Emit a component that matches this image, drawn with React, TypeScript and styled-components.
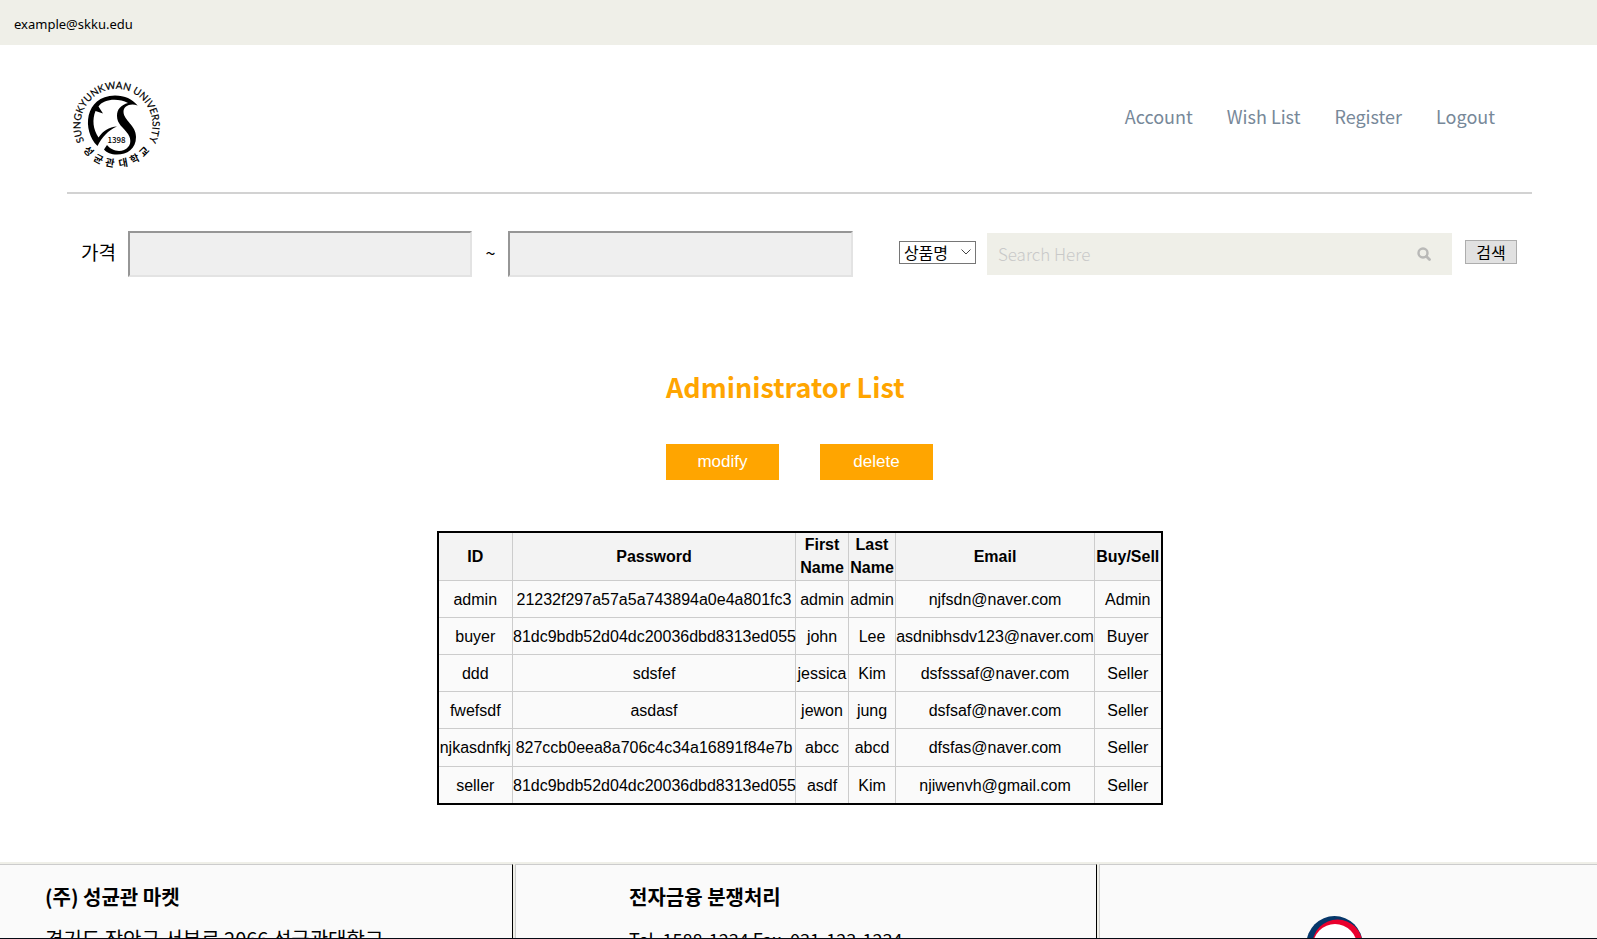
import React from "react";
import styled, { createGlobalStyle } from "styled-components";

const GlobalStyle = createGlobalStyle`
  * { box-sizing: border-box; }
  body {
    margin: 0;
    background: #fff;
    color: #000;
    font-family: "Noto Sans", "Noto Sans CJK KR", sans-serif;
    font-size: 16px;
  }
`;

const Page = styled.div`
  display: flex;
  flex-direction: column;
  height: 100vh;
  overflow: hidden;
  border-bottom: 1px solid #060a14;
`;

const TopBar = styled.div`
  flex: none;
  padding: 14px 14px 10px;
  background: #efefe8;
  font-size: 13px;
  line-height: 21px;
`;

const Header = styled.header`
  flex: none;
  display: flex;
  justify-content: space-between;
  align-items: flex-start;
  height: 149px;
  margin: 0 65px 0 67px;
  padding: 34px 20px 0 3px;
  border-bottom: 2px solid #d2d2d2;
`;

const Nav = styled.nav`
  display: flex;
  padding-top: 25px;
`;

const NavLink = styled.a`
  padding: 0 17px;
  color: #778899;
  font-family: "Noto Sans CJK KR", sans-serif;
  font-size: 18px;
  line-height: 24px;
  text-decoration: none;
`;

const SearchForm = styled.form`
  flex: none;
  display: flex;
  align-items: center;
  margin: 37px 80px 0 81px;
  height: 46px;
  font-family: "Noto Sans CJK KR", sans-serif;
`;

const PriceLabel = styled.label`
  width: 47px;
  padding-bottom: 4px;
  font-size: 19px;
  line-height: 24px;
`;

const PriceInput = styled.input`
  flex: 344 1 0;
  min-width: 0;
  height: 46px;
  padding: 0 10px;
  border: 2px solid;
  border-color: #969696 #e3e3e3 #e3e3e3 #969696;
  background: #efefef;
  font-size: 16px;
`;

const Tilde = styled.span`
  width: 36px;
  padding-bottom: 4px;
  text-align: center;
  font-size: 18px;
  line-height: 24px;
`;

const SelectBox = styled.span`
  display: grid;
  align-items: center;
  width: 77px;
  margin: 0 11px 4px 46px;
  svg {
    grid-area: 1 / 1;
    justify-self: end;
    margin-right: 5px;
    pointer-events: none;
  }
`;

const Select = styled.select`
  grid-area: 1 / 1;
  appearance: none;
  height: 23px;
  padding: 0 4px;
  border: 1px solid #767676;
  border-radius: 0;
  background: #fff;
  color: #000;
  font: 16px / 20px "Noto Sans CJK KR", sans-serif;
`;

const SearchBox = styled.label`
  flex: 465 1 0;
  min-width: 0;
  display: flex;
  align-items: center;
  height: 42px;
  padding: 0 21px 0 11px;
  background: #efefe8;
`;

const SearchInput = styled.input`
  flex: 1;
  min-width: 0;
  padding: 0;
  border: 0;
  background: none;
  font: 300 17px / 24px "Noto Sans CJK KR", sans-serif;
  &::placeholder { color: #c9c9c9; opacity: 1; }
`;

const SubmitButton = styled.button`
  width: 52px;
  height: 24px;
  margin: 0 0 4px 13px;
  padding: 0;
  border: 1px solid #adadad;
  background: #e1e1e1;
  color: #000;
  font: 16px / 20px "Noto Sans CJK KR", sans-serif;
`;

const Main = styled.main`
  flex: none;
  display: flex;
  flex-direction: column;
  align-items: center;
  padding: 90px 0 57px 2px;
`;

const TitleBlock = styled.div`
  width: 267px;
`;

const Title = styled.h1`
  margin: 0;
  color: orange;
  font-family: "Noto Sans CJK KR", sans-serif;
  font-size: 27px;
  line-height: 40px;
  white-space: nowrap;
`;

const Actions = styled.div`
  display: flex;
  justify-content: space-between;
  margin-top: 37px;
`;

const ActionButton = styled.button`
  width: 113px;
  height: 36px;
  padding: 0;
  border: 0;
  background: orange;
  color: #fff;
  font: 17px "Liberation Sans", sans-serif;
`;

const UserTable = styled.table`
  width: 724px;
  height: 274px;
  margin-top: 51px;
  border: 2px solid #000;
  border-collapse: collapse;
  background: #fafafa;
  font-family: "Liberation Sans", sans-serif;
  font-size: 16px;
  line-height: 23px;
  text-align: center;
  table-layout: fixed;
`;

const HeadCell = styled.th`
  height: 48px;
  padding: 0;
  border: 1px solid #ccc;
  background: #f3f3f3;
`;

const Cell = styled.td`
  padding: 1px 0 0;
  border: 1px solid #ccc;
  white-space: nowrap;
`;

const Footer = styled.footer`
  flex: none;
  display: grid;
  grid-template-columns: 513fr 582fr 498fr;
  gap: 2px;
  border-top: 2px solid #efefe8;
  background: #efefe8;
`;

const FooterColumn = styled.section`
  min-width: 0;
  height: 160px;
  padding: 19px 0 0 113px;
  border: solid;
  border-width: 1px 1px 0 1px;
  border-color: #ccc #000 #ccc #ccc;
  background: #fafafa;
  font-family: "Noto Sans CJK KR", sans-serif;
  &:first-child { padding-left: 45px; border-left: 0; }
  &:last-child { padding: 50px 0 0 206px; border-right: 0; }
`;

const FooterTitle = styled.h2`
  margin: 0;
  font-size: 20px;
  line-height: 26px;
`;

const FooterText = styled.p<{ $size: number }>`
  margin: 16px 0 0;
  font-size: ${({ $size }) => $size}px;
  line-height: 26px;
`;

const columns = [
  { name: "ID", width: 75 },
  { name: "Password", width: 283 },
  { name: "First Name", width: 53 },
  { name: "Last Name", width: 47 },
  { name: "Email", width: 199 },
  { name: "Buy/Sell", width: 67 },
];

const users = [
  ["admin", "21232f297a57a5a743894a0e4a801fc3", "admin", "admin", "njfsdn@naver.com", "Admin"],
  ["buyer", "81dc9bdb52d04dc20036dbd8313ed055", "john", "Lee", "asdnibhsdv123@naver.com", "Buyer"],
  ["ddd", "sdsfef", "jessica", "Kim", "dsfsssaf@naver.com", "Seller"],
  ["fwefsdf", "asdasf", "jewon", "jung", "dsfsaf@naver.com", "Seller"],
  ["njkasdnfkj", "827ccb0eea8a706c4c34a16891f84e7b", "abcc", "abcd", "dfsfas@naver.com", "Seller"],
  ["seller", "81dc9bdb52d04dc20036dbd8313ed055", "asdf", "Kim", "njiwenvh@gmail.com", "Seller"],
];

const sealSyllables = [
  { text: "성", angle: 47 },
  { text: "균", angle: 28 },
  { text: "관", angle: 10 },
  { text: "대", angle: -10 },
  { text: "학", angle: -28 },
  { text: "교", angle: -46 },
];

const UniversityLogo = () => (
  <svg width="92" height="92" viewBox="70 79 92 92" role="img" aria-label="Sungkyunkwan University">
    <defs>
      <path id="ring-top" d="M116.400 161 A36 36 0 1 1 116.600 161" />
    </defs>
    <text fontFamily="Lato, sans-serif" fontSize="10" fill="#000" stroke="#000" strokeWidth=".2">
      <textPath href="#ring-top" startOffset="50%" textAnchor="middle">SUNGKYUNKWAN UNIVERSITY</textPath>
    </text>
    <g fontFamily="Noto Sans CJK KR, sans-serif" fontWeight="700" fontSize="10" textAnchor="middle">
      {sealSyllables.map(({ text, angle }) => (
        <text key={text} x="116.500" y="167" transform={`rotate(${angle} 116.500 125)`}>{text}</text>
      ))}
    </g>
    <path d="M97.500 146 C82 131 84 96 115 95.500 C125 95.500 132 99 137.700 105.500 C130 103 123.500 106 123.500 112 C124 121 136 125 136 137 C136 149 127 154.500 117 154.500 C111 154.500 107 153 104 149.500 L107 145 C111 150 118 152.500 124 150 C131 147 132 140 128 134 C123 127 117 124 117 116 C117 109 121 105 128 103 C118 97.500 103 99 98.500 106.500 L103 113.500 L95.500 111 C92 120 93 129 98.500 137.500 C103 131 109 127 117 126.500 C108 130.500 102 137 97.500 146 Z" />
    <text x="116.500" y="142.500" textAnchor="middle" fontFamily="Noto Sans CJK KR, sans-serif" fontWeight="500" fontSize="8">1398</text>
  </svg>
);

const MagnifierIcon = () => (
  <svg width="14" height="14" viewBox="0 0 14 14" fill="none" stroke="#b9b9b7" aria-hidden="true">
    <circle cx="6" cy="6" r="4.500" strokeWidth="2.400" />
    <path d="M9.500 9.500 L12.500 12.500" strokeWidth="2.800" strokeLinecap="round" />
  </svg>
);

const FairTradeMark = () => (
  <svg width="58" height="58" viewBox="1306 915 58 58" role="img" aria-label="Fair Trade Commission">
    <circle cx="1334.500" cy="944" r="28" fill="#06376a" />
    <circle cx="1337.500" cy="944.500" r="25" fill="#e9002d" />
    <circle cx="1335" cy="946" r="22" fill="#fff" />
  </svg>
);

export default function App() {
  return (
    <>
      <GlobalStyle />
      <Page>
        <TopBar>example@skku.edu</TopBar>
        <Header>
          <UniversityLogo />
          <Nav>
            {["Account", "Wish List", "Register", "Logout"].map((item) => (
              <NavLink key={item} href="#">{item}</NavLink>
            ))}
          </Nav>
        </Header>
        <SearchForm onSubmit={(event) => event.preventDefault()}>
          <PriceLabel htmlFor="price-from">가격</PriceLabel>
          <PriceInput id="price-from" />
          <Tilde>~</Tilde>
          <PriceInput aria-label="최고 가격" />
          <SelectBox>
            <Select aria-label="검색 기준">
              <option>상품명</option>
            </Select>
            <svg width="10" height="6" viewBox="0 0 10 6" fill="none" stroke="#444">
              <path d="M.5 .5 L5 5 L9.500 .5" />
            </svg>
          </SelectBox>
          <SearchBox>
            <SearchInput aria-label="Search" placeholder="Search Here" />
            <MagnifierIcon />
          </SearchBox>
          <SubmitButton type="submit">검색</SubmitButton>
        </SearchForm>
        <Main>
          <TitleBlock>
            <Title>Administrator List</Title>
            <Actions>
              <ActionButton type="button">modify</ActionButton>
              <ActionButton type="button">delete</ActionButton>
            </Actions>
          </TitleBlock>
          <UserTable>
            <colgroup>
              {columns.map((column) => <col key={column.name} width={column.width} />)}
            </colgroup>
            <thead>
              <tr>{columns.map((column) => <HeadCell key={column.name} scope="col">{column.name}</HeadCell>)}</tr>
            </thead>
            <tbody>
              {users.map((user) => (
                <tr key={user[0]}>{user.map((value, index) => <Cell key={index}>{value}</Cell>)}</tr>
              ))}
            </tbody>
          </UserTable>
        </Main>
        <Footer>
          <FooterColumn>
            <FooterTitle>(주) 성균관 마켓</FooterTitle>
            <FooterText $size={20}>경기도 장안구 서부로 2066 성균관대학교</FooterText>
          </FooterColumn>
          <FooterColumn>
            <FooterTitle>전자금융 분쟁처리</FooterTitle>
            <FooterText $size={18}>Tel. 1588-1234 Fax. 031-123-1234</FooterText>
          </FooterColumn>
          <FooterColumn>
            <FairTradeMark />
          </FooterColumn>
        </Footer>
      </Page>
    </>
  );
}
